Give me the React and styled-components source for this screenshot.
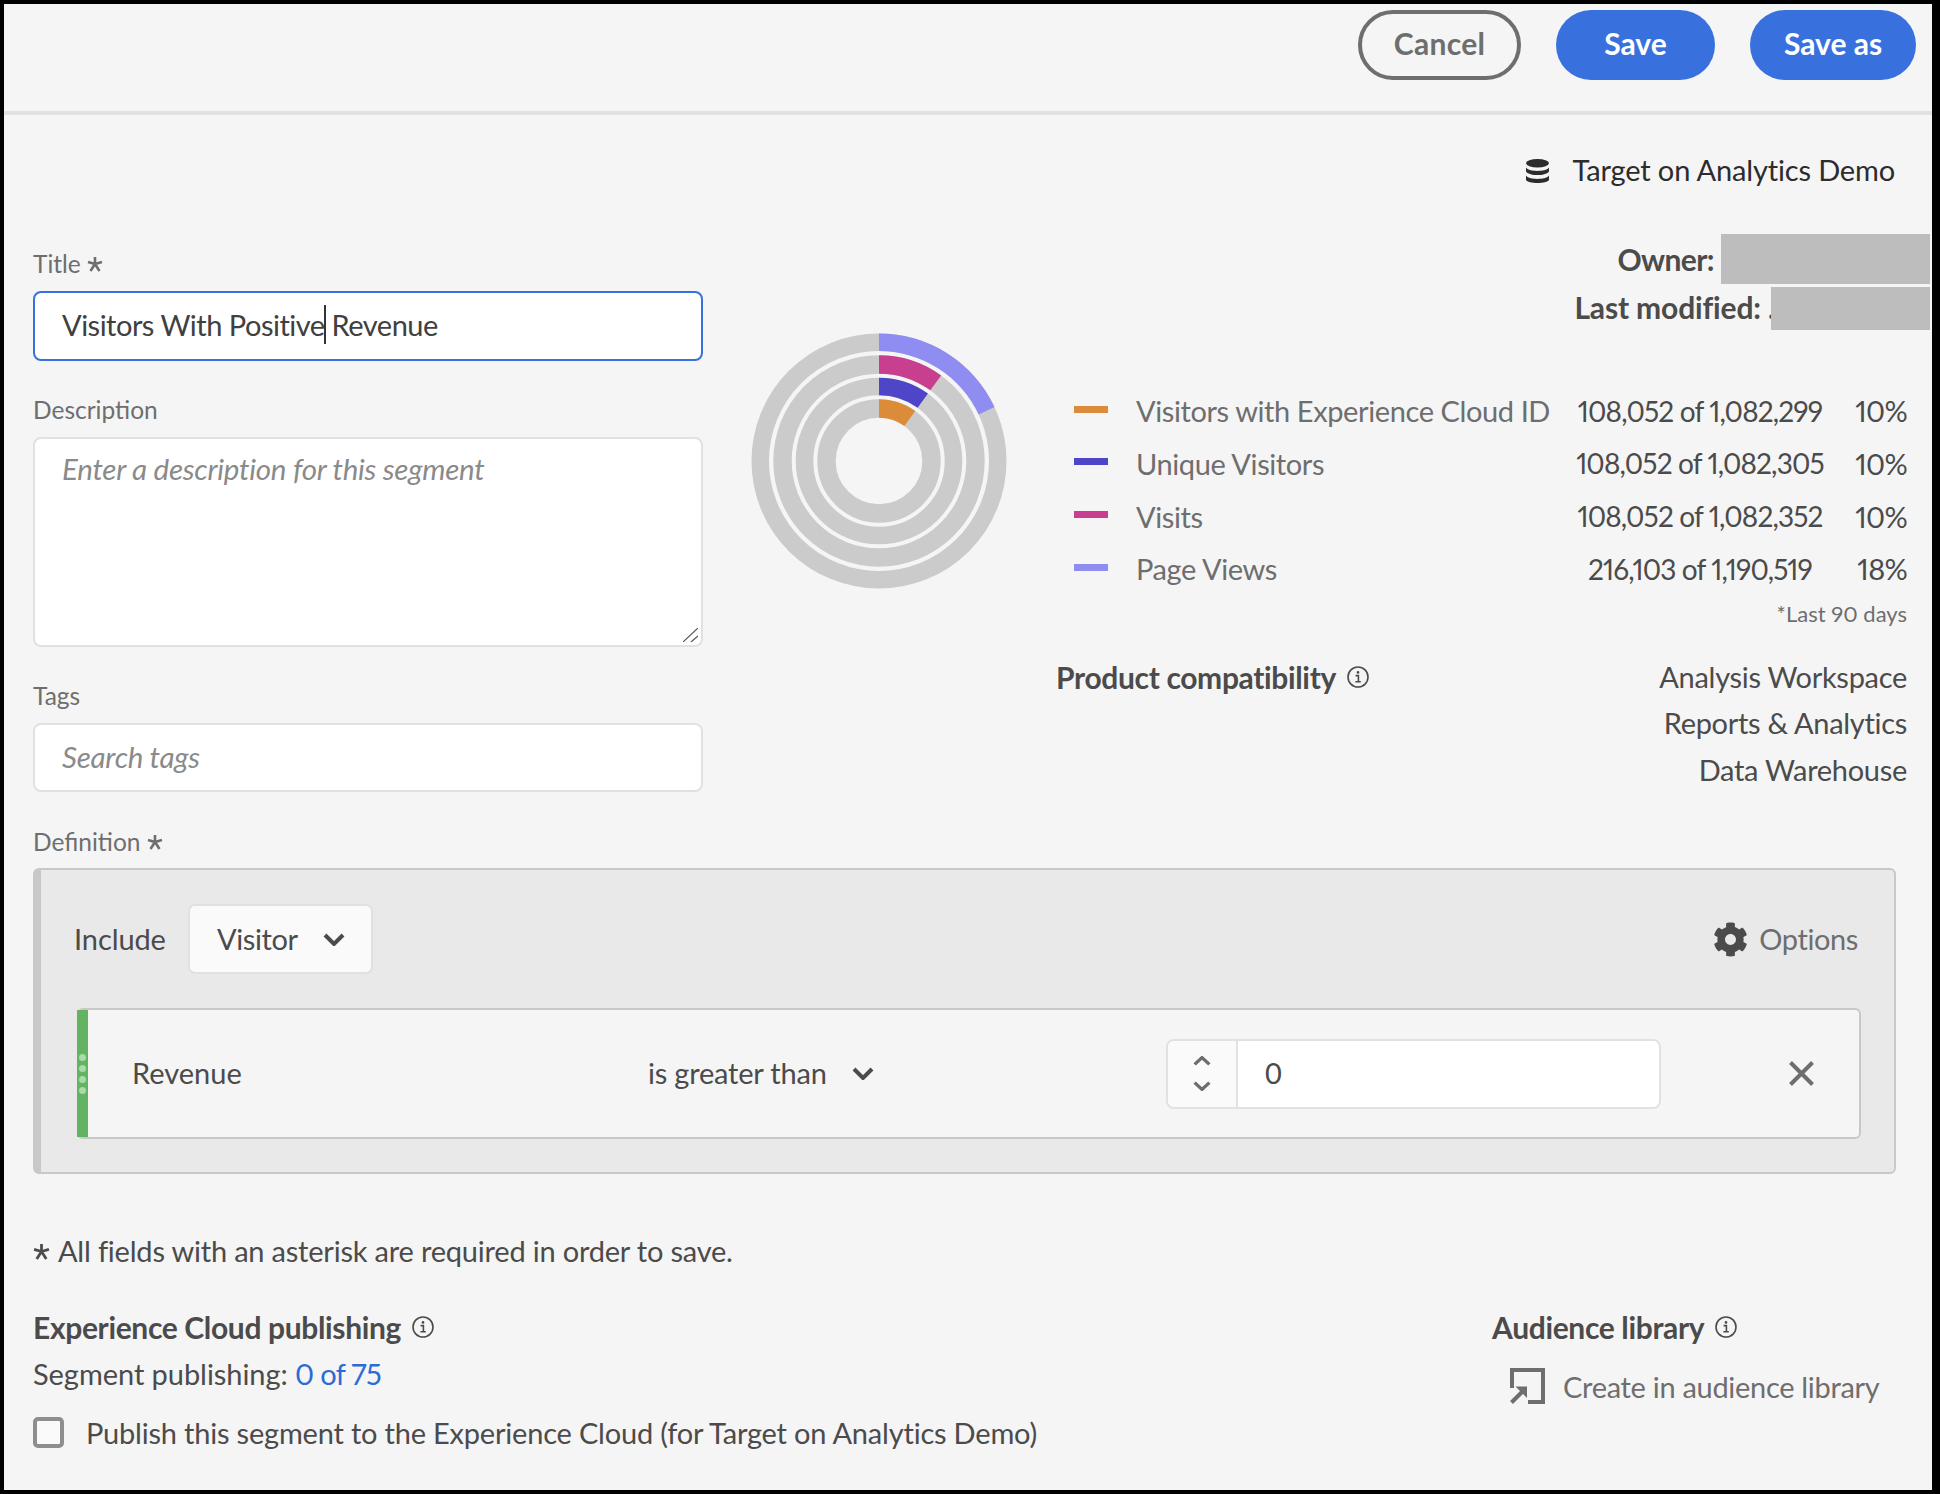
import React from 'react';
import styled, { createGlobalStyle } from 'styled-components';
import { FaCog } from 'react-icons/fa';

const Global = createGlobalStyle`
  html, body { margin: 0; padding: 0; background: #000; }
  * { box-sizing: border-box; }
  body { font-family: Lato, "Liberation Sans", sans-serif; color: #4b4b4b; font-variant-numeric: proportional-nums; }
`;

const Frame = styled.div`
  width: 1940px; height: 1494px; background: #000;
  padding: 4px 8px 4px 4px;
`;
const Screen = styled.div`
  width: 1928px; height: 1486px; background: #f5f5f5; overflow: hidden;
`;
const Header = styled.header`
  height: 111px; border-bottom: 4px solid #e1e1e1;
  display: flex; justify-content: flex-end; align-items: flex-start; gap: 35px;
  padding: 6px 16px 0 0;
`;
const PillButton = styled.button`
  height: 70px; width: ${p => p.$w}px; border-radius: 35px;
  font: 700 30px/1 Lato, sans-serif; letter-spacing: ${p => p.$primary ? '0' : '0.3px'};
  border: ${p => p.$primary ? '0' : '4px solid #6e6e6e'};
  background: ${p => p.$primary ? '#3871de' : 'transparent'};
  color: ${p => p.$primary ? '#fff' : '#6e6e6e'};
  padding: 0 0 4px;
`;
const Body = styled.main`
  padding: 0 2px 0 29px;
`;
const SourceRow = styled.div`
  height: 119px; padding: 35px 35px 0 0;
  display: flex; justify-content: flex-end; align-items: flex-start; gap: 24px;
  font-size: 29px; line-height: 40px; color: #2c2c2c;
  letter-spacing: -0.15px;
  svg { margin-top: 9px; }
`;
const TopGrid = styled.div`
  display: grid; grid-template-columns: 670px 353px 1fr;
  height: 560px;
`;
const LeftCol = styled.div`
  padding-top: 15px; display: flex; flex-direction: column; gap: 34px;
`;
const Field = styled.div`display: flex; flex-direction: column;`;
const Label = styled.label`
  height: 30px; line-height: 28px; margin-bottom: 12px; font-size: 24.5px; color: #6e6e6e;
  display: flex; align-items: center; gap: 6px; padding-top: ${p => p.$drop || 0}px;
`;
const TitleBox = styled.div`
  height: 70px; border: 2px solid #3871de; border-radius: 8px; background: #fff;
  display: flex; align-items: center; padding: 0 0 3px 27px;
  font-size: 29px; color: #404040; letter-spacing: -0.5px; white-space: pre;
`;
const Caret = styled.span`
  display: inline-block; width: 2px; height: 39px; background: #333; margin: 0 -1px;
`;
const DescWrap = styled.div`position: relative; height: 210px;`;
const DescArea = styled.textarea`
  height: 210px; border: 2px solid #e1e1e1; border-radius: 8px; background: #fff;
  padding: 12px 27px; font: 29.5px/36px Lato, sans-serif; outline: none; resize: none;
  letter-spacing: -0.25px; width: 670px; display: block;
  &::placeholder { color: #8a8a8a; font-style: italic; opacity: 1; }
`;
const ResizeMark = styled.svg`
  position: absolute; right: 5px; bottom: 5px; width: 15px; height: 14px;
`;
const TagInput = styled.input`
  height: 69px; border: 2px solid #e1e1e1; border-radius: 8px; background: #fff;
  padding: 0 27px 2px; font: 29.5px Lato, sans-serif; outline: none; letter-spacing: -0.25px;
  &::placeholder { color: #8a8a8a; font-style: italic; opacity: 1; }
`;
const DonutCell = styled.div`
  padding: 99px 2px 0 0; display: flex; justify-content: center; align-items: flex-start;
`;
const RightCol = styled.div`display: flex; flex-direction: column;`;
const OwnerRow = styled.div`
  display: flex; justify-content: flex-end; align-items: center;
  height: ${p => p.$h}px; margin-bottom: ${p => p.$mb}px; gap: ${p => p.$gap}px;
  font-weight: 700; font-size: 30px; color: #4b4b4b;
`;
const OwnerText = styled.span`
  padding-bottom: ${p => p.$lift}px; white-space: pre; letter-spacing: ${p => p.$ls}px;
  margin-right: ${p => p.$over || 0}px;
`;
const Redacted = styled.span`
  display: block; height: 100%; width: ${p => p.$w}px; background: #bdbdbd;
`;
const Legend = styled.div`margin-top: 56px; padding: 0 23px 0 18px;`;
const LegendRow = styled.div`
  display: grid; grid-template-columns: 62px 1fr 260px 77px; align-items: center;
  height: 52.67px; font-size: 29px; letter-spacing: -0.4px; white-space: nowrap;
`;
const Swatch = styled.i`
  display: block; width: 34px; height: 7px; background: ${p => p.$c}; margin-bottom: 6px;
`;
const LegendName = styled.span`color: #6e6e6e; padding-bottom: 3px;`;
const LegendCount = styled.span`text-align: center; font-size: 28px; letter-spacing: -0.85px; padding-bottom: 3px;`;
const LegendPct = styled.span`text-align: right; letter-spacing: -0.7px; padding-bottom: 3px;`;
const Footnote = styled.div`
  margin: 4px 23px 0 0; height: 26px; line-height: 26px; text-align: right;
  font-size: 22px; color: #6e6e6e;
`;
const Compat = styled.div`
  margin: 27px 23px 0 0; display: flex; justify-content: space-between;
`;
const SectionTitle = styled.div`
  display: flex; align-items: center; gap: 11px;
  font-weight: 700; font-size: 30px; line-height: 30px; color: #4b4b4b; letter-spacing: -0.35px;
  height: ${p => p.$h || 30}px;
`;
const CompatList = styled.div`text-align: right;`;
const CompatItem = styled.div`
  height: 46.67px; line-height: 46.67px; font-size: 29px; letter-spacing: -0.3px; color: #4b4b4b;
`;
const Definition = styled.section`margin-top: 32px; margin-right: 34px;`;
const DefBox = styled.div`
  height: 306px; background: #e9e9e9; border: 2px solid #c8c8c8; border-left-width: 8px;
  border-radius: 6px; padding: 34px 33px 33px 34px;
  display: flex; flex-direction: column; gap: 34px;
`;
const DefTop = styled.div`display: flex; align-items: center; height: 70px; font-size: 29px;`;
const IncludeLabel = styled.span`width: 114px; margin-left: -1px; padding-bottom: 2px; letter-spacing: -0.1px;`;
const Select = styled.div`
  width: 185px; height: 70px; background: #fafafa; border: 2px solid #e1e1e1; border-radius: 7px;
  display: flex; align-items: center; padding: 0 0 0 27px; gap: 25px;
`;
const SelectText = styled.span`padding-bottom: 2px; letter-spacing: -0.4px;`;
const Options = styled.div`
  margin-left: auto; margin-right: 3px; display: flex; align-items: center; gap: 11px; color: #6e6e6e;
  letter-spacing: -0.4px;
  svg { color: #4b4b4b; }
`;
const OptionsText = styled.span`padding-bottom: 2px;`;
const Rule = styled.div`
  height: 131px; margin-left: 2px; background: #f5f5f5; border: 2px solid #c8c8c8; border-left: 0; border-radius: 6px;
  display: grid; grid-template-columns: 11px 560px 518px 495px 1fr; align-items: center;
  font-size: 29px;
`;
const Grip = styled.div`
  align-self: stretch; background: #63b363; display: flex; flex-direction: column;
  align-items: center; justify-content: center; gap: 4px;
`;
const GripDot = styled.i`display: block; width: 7px; height: 7px; border-radius: 50%; background: #a8dba8;`;
const RuleName = styled.span`padding: 0 0 2px 44px;`;
const Operator = styled.div`display: flex; align-items: center; gap: 25px; letter-spacing: -0.2px;`;
const OperatorText = styled.span`padding-bottom: 3px;`;
const NumberField = styled.div`
  height: 70px; border: 2px solid #e1e1e1; border-radius: 8px; display: flex; overflow: hidden; background: #fff;
`;
const Stepper = styled.div`
  width: 70px; background: #fafafa; border-right: 2px solid #e1e1e1;
  display: flex; flex-direction: column; align-items: center; justify-content: center; gap: 15px;
`;
const NumberInput = styled.input`
  border: 0; outline: none; flex: 1; min-width: 0; background: #fff; padding: 0 0 2px 27px;
  font: 29px Lato, sans-serif; color: #4b4b4b;
`;
const RemoveCell = styled.div`justify-self: end; margin-right: 45px; display: flex;`;
const Note = styled.div`
  margin-top: 62px; height: 30px; line-height: 30px; font-size: 29px;
  display: flex; align-items: center; gap: 8px; letter-spacing: -0.2px;
`;
const Footer = styled.footer`
  margin-top: 46px; display: grid; grid-template-columns: 1459px 1fr;
`;
const PubCol = styled.div`display: flex; flex-direction: column;`;
const Publishing = styled.div`
  margin-top: 17px; height: 30px; line-height: 30px; font-size: 29px; letter-spacing: -0.05px;
`;
const Link = styled.span`color: #2c6bd5; letter-spacing: -0.7px;`;
const CheckRow = styled.div`
  margin-top: 28px; display: flex; align-items: center; gap: 22px; font-size: 29px; letter-spacing: -0.2px;
  height: 31px;
`;
const CheckBox = styled.i`
  display: block; width: 31px; height: 31px; border: 4px solid #8e8e8e; border-radius: 5px; background: #fafafa;
`;
const AudienceCol = styled.div`display: flex; flex-direction: column;`;
const CreateLink = styled.div`
  margin: 26px 0 0 18px; display: flex; align-items: center; gap: 18px; height: 36px;
  font-size: 29px; color: #6e6e6e; letter-spacing: -0.3px;
`;

const Ast = ({ size = 16, color = '#6e6e6e' }) => (
  <svg width={size} height={size} viewBox="0 0 16 16" fill="none" stroke={color} strokeWidth="2.6">
    <path d="M8 1v7M1 6l7 2M15 6L8 8M3.5 15L8 8M12.5 15L8 8" />
  </svg>
);
const Info = () => (
  <svg width="22" height="22" viewBox="0 0 22 22" fill="none" stroke="#4b4b4b">
    <circle cx="11" cy="11" r="10" strokeWidth="1.6" />
    <path d="M8.6 9.600h2.800v6M8.400 15.800h5.400" strokeWidth="1.6" />
    <circle cx="11" cy="6.4" r="1.3" fill="#4b4b4b" stroke="none" />
  </svg>
);
const Chevron = ({ w = 22, h = 13, sw = 4, up, color = '#4b4b4b' }) => (
  <svg width={w} height={h} viewBox="0 0 22 13" fill="none" stroke={color} strokeWidth={sw} preserveAspectRatio="none">
    <path d={up ? 'M2 11L11 2l9 9' : 'M2 2l9 9 9-9'} />
  </svg>
);
const DataIcon = () => (
  <svg width="23" height="24" viewBox="0 0 23 24" fill="#2c2c2c">
    <ellipse cx="11.5" cy="4.2" rx="11.5" ry="4.2" />
    <path d="M0 8.5c2 2.6 7 3.4 11.5 3.4S21 11.1 23 8.5v4c-2 2.6-7 3.6-11.5 3.6S2 15.100 0 12.500z" />
    <path d="M0 16.500c2 2.600 7 3.400 11.500 3.400S21 19.100 23 16.500V21c-1 2-6 3-11.500 3S1 23 0 21z" />
  </svg>
);
const CreateIcon = () => (
  <svg width="35" height="36" viewBox="0 0 35 36" fill="none" stroke="#6e6e6e" strokeWidth="4">
    <path d="M2 20V2h31v32H18" />
    <path d="M1.500 34.500L13 23" />
    <path d="M5.500 18.500H17V30z" fill="#6e6e6e" stroke="none" />
  </svg>
);
const CloseIcon = () => (
  <svg width="25" height="25" viewBox="0 0 25 25" stroke="#6e6e6e" strokeWidth="4" fill="none">
    <path d="M1.500 1.500l22 22M23.500 1.500l-22 22" />
  </svg>
);

const CX = 128, CY = 128;
const polar = (r, deg) => {
  const a = (deg - 90) * Math.PI / 180;
  return [CX + r * Math.cos(a), CY + r * Math.sin(a)];
};
const sector = (ro, ri, deg) => {
  const [x1, y1] = polar(ro, 0), [x2, y2] = polar(ro, deg), [x3, y3] = polar(ri, deg), [x4, y4] = polar(ri, 0);
  return `M${x1} ${y1}A${ro} ${ro} 0 0 1 ${x2} ${y2}L${x3} ${y3}A${ri} ${ri} 0 0 0 ${x4} ${y4}Z`;
};
const rings = [
  { ro: 127.5, ri: 110, deg: 65, c: '#8f8cf2' },
  { ro: 105.7, ri: 87.3, deg: 36, c: '#c73f8e' },
  { ro: 83.3, ri: 65.7, deg: 36, c: '#4f45c9' },
  { ro: 61.7, ri: 43.3, deg: 36, c: '#dc8c38' },
];
const Donut = () => (
  <svg width="256" height="256" viewBox="0 0 256 256" fill="none">
    {rings.map(r => (
      <g key={r.c}>
        <circle cx={CX} cy={CY} r={(r.ro + r.ri) / 2} stroke="#cbcbcb" strokeWidth={r.ro - r.ri} />
        <path d={sector(r.ro, r.ri, r.deg)} fill={r.c} />
      </g>
    ))}
  </svg>
);

const legend = [
  ['#dc8c38', 'Visitors with Experience Cloud ID', '108,052', '1,082,299', '10%'],
  ['#4f45c9', 'Unique Visitors', '108,052', '1,082,305', '10%'],
  ['#c73f8e', 'Visits', '108,052', '1,082,352', '10%'],
  ['#8f8cf2', 'Page Views', '216,103', '1,190,519', '18%'],
];

export default function App() {
  return (
    <Frame>
      <Global />
      <Screen>
        <Header>
          <PillButton $w={163}>Cancel</PillButton>
          <PillButton $w={159} $primary>Save</PillButton>
          <PillButton $w={166} $primary>Save as</PillButton>
        </Header>
        <Body>
          <SourceRow><DataIcon /><span>Target on Analytics Demo</span></SourceRow>
          <TopGrid>
            <LeftCol>
              <Field>
                <Label>Title <Ast /></Label>
                <TitleBox>Visitors With Positive<Caret /> Revenue</TitleBox>
              </Field>
              <Field>
                <Label>Description</Label>
                <DescWrap>
                  <DescArea readOnly placeholder="Enter a description for this segment" />
                  <ResizeMark viewBox="0 0 15 14" fill="none" stroke="#555" strokeWidth="1.2">
                    <path d="M0 14L15 0M8 14l7-6" />
                  </ResizeMark>
                </DescWrap>
              </Field>
              <Field>
                <Label>Tags</Label>
                <TagInput readOnly placeholder="Search tags" />
              </Field>
            </LeftCol>
            <DonutCell><Donut /></DonutCell>
            <RightCol>
              <OwnerRow $h={50} $mb={3} $gap={7}><OwnerText $lift={1} $ls={-0.6}>Owner:</OwnerText><Redacted $w={209} /></OwnerRow>
              <OwnerRow $h={43} $mb={0} $gap={0}><OwnerText $lift={4} $ls={-0.15} $over={-4}>Last modified: .</OwnerText><Redacted $w={159} /></OwnerRow>
              <Legend>
                {legend.map(([c, name, n, total, pct]) => (
                  <LegendRow key={name}>
                    <Swatch $c={c} />
                    <LegendName>{name}</LegendName>
                    <LegendCount>{n} of {total}</LegendCount>
                    <LegendPct>{pct}</LegendPct>
                  </LegendRow>
                ))}
              </Legend>
              <Footnote>*Last 90 days</Footnote>
              <Compat>
                <SectionTitle $h={46}>Product compatibility <Info /></SectionTitle>
                <CompatList>
                  <CompatItem>Analysis Workspace</CompatItem>
                  <CompatItem>Reports &amp; Analytics</CompatItem>
                  <CompatItem>Data Warehouse</CompatItem>
                </CompatList>
              </Compat>
            </RightCol>
          </TopGrid>
          <Definition>
            <Label $drop={1}>Definition <Ast /></Label>
            <DefBox>
              <DefTop>
                <IncludeLabel>Include</IncludeLabel>
                <Select><SelectText>Visitor</SelectText> <Chevron /></Select>
                <Options><FaCog size={35} /> <OptionsText>Options</OptionsText></Options>
              </DefTop>
              <Rule>
                <Grip>{[0, 1, 2, 3].map(i => <GripDot key={i} />)}</Grip>
                <RuleName>Revenue</RuleName>
                <Operator><OperatorText>is greater than</OperatorText> <Chevron /></Operator>
                <NumberField>
                  <Stepper>
                    <Chevron up w={18} h={10} sw={4} color="#6e6e6e" />
                    <Chevron w={18} h={10} sw={4} color="#6e6e6e" />
                  </Stepper>
                  <NumberInput readOnly value="0" />
                </NumberField>
                <RemoveCell><CloseIcon /></RemoveCell>
              </Rule>
            </DefBox>
          </Definition>
          <Note><Ast size={17} color="#4b4b4b" /> All fields with an asterisk are required in order to save.</Note>
          <Footer>
            <PubCol>
              <SectionTitle>Experience Cloud publishing <Info /></SectionTitle>
              <Publishing>Segment publishing: <Link>0 of 75</Link></Publishing>
              <CheckRow><CheckBox /> Publish this segment to the Experience Cloud (for Target on Analytics Demo)</CheckRow>
            </PubCol>
            <AudienceCol>
              <SectionTitle>Audience library <Info /></SectionTitle>
              <CreateLink><CreateIcon /> Create in audience library</CreateLink>
            </AudienceCol>
          </Footer>
        </Body>
      </Screen>
    </Frame>
  );
}
